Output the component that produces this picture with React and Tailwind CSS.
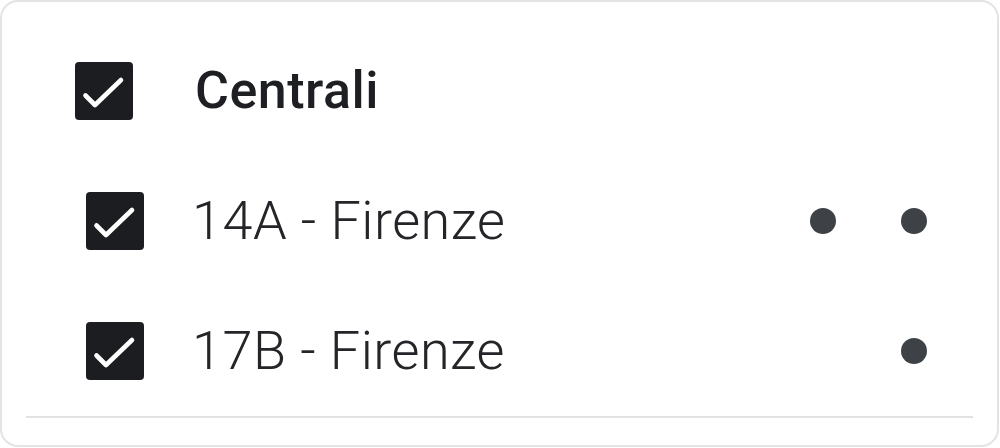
const Check = ({ className }) => (
  <div
    className={`flex h-[58px] w-[58px] shrink-0 items-center justify-center rounded-[4px] bg-[#1b1d20] ${className}`}
  >
    <svg width="58" height="58" viewBox="0 0 58 58" fill="none">
      <path
        d="M10.5 33.5l9.5 9.5L46 18"
        stroke="#ffffff"
        strokeWidth="4.6"
        strokeLinecap="round"
        strokeLinejoin="round"
      />
    </svg>
  </div>
);

const Dot = ({ hidden }) => (
  <span
    className={`block h-[26px] w-[26px] rounded-full bg-[#3e4246] ${hidden ? "invisible" : ""}`}
  />
);

const righe = [
  { nome: "14A - Firenze", punti: [true, true] },
  { nome: "17B - Firenze", punti: [false, true] },
];

export default function App() {
  return (
    <div
      className="h-[448px] w-[1000px] bg-white"
      style={{ fontFamily: "Roboto, 'Liberation Sans', sans-serif" }}
    >
      <div className="flex h-[447px] w-[999px] flex-col rounded-[18px] border-2 border-[#e4e4e4] px-[24px] pt-[24px]">
        {/* Intestazione gruppo */}
        <div className="flex h-[130px] items-center">
          <Check className="ml-[49px]" />
          <span className="ml-[62px] text-[52px] font-medium leading-none tracking-[0.5px] text-[#1d1f22]">
            Centrali
          </span>
        </div>

        {/* Elementi */}
        {righe.map((r) => (
          <div key={r.nome} className="flex h-[130px] items-center">
            <Check className="ml-[60px]" />
            <span className="ml-[48px] text-[54px] font-light leading-none tracking-[0.5px] text-[#232528]">
              {r.nome}
            </span>
            <div className="ml-auto mr-[46px] flex gap-[65px]">
              <Dot hidden={!r.punti[0]} />
              <Dot hidden={!r.punti[1]} />
            </div>
          </div>
        ))}

        <div className="h-[2px] bg-[#e2e2e2]" />
      </div>
    </div>
  );
}
